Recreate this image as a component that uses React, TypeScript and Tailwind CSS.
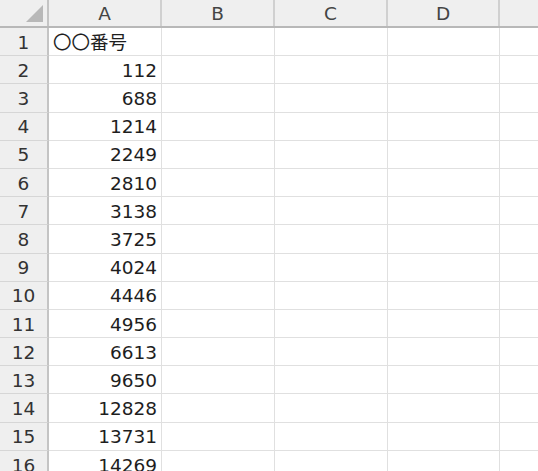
const cols = ["A", "B", "C", "D", ""];
const widths = ["w-[113px]", "w-[113px]", "w-[113px]", "w-[112px]", "w-[113px]"];
const values = ["〇〇番号", "112", "688", "1214", "2249", "2810", "3138", "3725", "4024", "4446", "4956", "6613", "9650", "12828", "13731", "14269"];

const font = { fontFamily: '"DejaVu Sans", "Noto Sans CJK JP", sans-serif' };

export default function App() {
  return (
    <div className="w-[538px] h-[471px] overflow-hidden bg-white text-[18.5px] text-[#1e1e1e]" style={font}>
      {/* Column header */}
      <div className="flex h-[28px] bg-[#efefef] border-b-2 border-[#b8b8b8]">
        <div className="relative w-[49px] shrink-0 border-r-2 border-[#c4c4c4]">
          <svg className="absolute right-[4px] bottom-[4px]" width="17" height="17" viewBox="0 0 17 17">
            <polygon points="17,0 17,17 0,17" fill="#b8b8b8" />
          </svg>
        </div>
        {cols.map((c, i) => (
          <div
            key={i}
            className={widths[i] + " shrink-0 flex items-center justify-center pt-[2px] text-[#444] border-r-2 border-[#d0d0d0]"}
          >
            {c}
          </div>
        ))}
      </div>

      {/* Rows */}
      {values.map((v, r) => (
        <div key={r} className="flex h-[28.2px]">
          <div className="w-[49px] shrink-0 flex items-center justify-center pt-[2px] bg-[#efefef] text-[#333] border-r-2 border-b border-r-[#c4c4c4] border-b-[#d6d6d6]">
            {r + 1}
          </div>
          <div
            className={
              "w-[113px] shrink-0 flex items-center pt-[2px] border-r border-b border-[#e0e0e0] " +
              (r === 0 ? "justify-start pl-[4px]" : "justify-end pr-[4px]")
            }
          >
            {v}
          </div>
          {[1, 2, 3, 4].map((k) => (
            <div key={k} className={widths[k] + " shrink-0 border-r border-b border-[#e0e0e0]"} />
          ))}
        </div>
      ))}
    </div>
  );
}
